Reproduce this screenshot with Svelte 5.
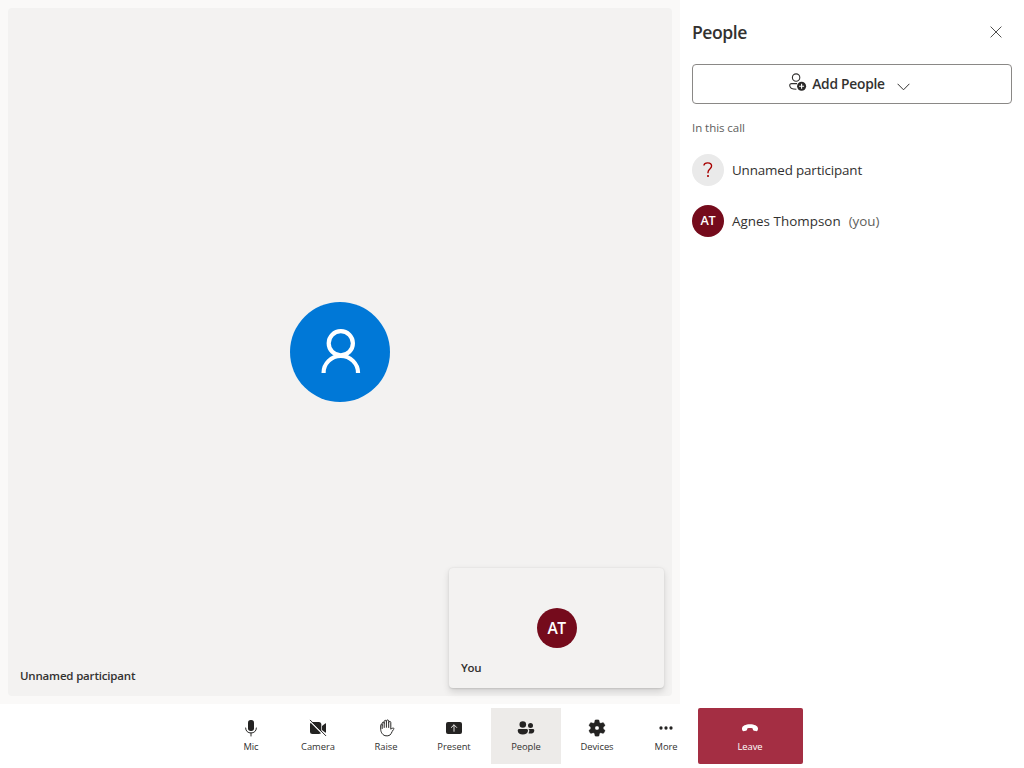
<script>
  const controls = [
    { id: 'mic', label: 'Mic', width: 60 },
    { id: 'camera', label: 'Camera', width: 74 },
    { id: 'raise', label: 'Raise', width: 62 },
    { id: 'present', label: 'Present', width: 74 },
    { id: 'people', label: 'People', width: 70, active: true },
    { id: 'devices', label: 'Devices', width: 73 },
    { id: 'more', label: 'More', width: 64 },
    { id: 'leave', label: 'Leave', width: 105 }
  ];
</script>

<div class="app">
  <div class="main">
    <section class="stage">
      <div class="tile">
        <div class="persona">
          <svg width="100" height="100" viewBox="0 0 100 100" fill="none" stroke="#fff" stroke-width="4.2">
            <circle cx="50.8" cy="41.2" r="12.1" />
            <path d="M33.6 71V70.6C33.6 61.6 41.3 53.9 50.8 53.9S68 61.600 68 70.600V71" />
          </svg>
        </div>
        <span class="name">Unnamed participant</span>
        <div class="self">
          <div class="avatar large">AT</div>
          <span class="you">You</span>
        </div>
      </div>
    </section>

    <aside class="pane">
      <header>
        <h2>People</h2>
        <button class="close" aria-label="Close">
          <svg width="12" height="12" viewBox="0 0 12 12" fill="none" stroke="#3b3a39" stroke-width=".9"><path d="M.6.6l10.8 10.8M11.4.6L.6 11.4" /></svg>
        </button>
      </header>
      <button class="add">
        <svg class="addicon" width="18" height="18" viewBox="0 0 18 18">
          <g fill="none" stroke="#323130" stroke-width="1.1">
            <circle cx="7.1" cy="4.6" r="3.7" />
            <path d="M8.1 10.6H2.5C1.4 10.6.7 11.3.7 12.2c0 2.6 2.7 4.1 6.7 4.1" />
          </g>
          <circle cx="12.6" cy="13.2" r="4.5" fill="#292827" />
          <path d="M12.6 10.7v5M10.1 13.2h5" stroke="#fff" stroke-width="1.1" />
        </svg>
        <span class="addlabel">Add People</span>
        <svg class="chev" width="13" height="8" viewBox="0 0 13 8" fill="none" stroke="#323130" stroke-width="1"><path d="M.6.8l5.9 6 5.9-6" /></svg>
      </button>
      <p class="heading">In this call</p>
      <ul>
        <li>
          <div class="avatar unknown">
            <svg width="10" height="16" viewBox="0 0 10 16" fill="none" stroke="#a80000" stroke-width="1.35"><path d="M.9 3.5C1.1 1.8 2.700.9 4.700.9c2.300 0 3.900 1.200 3.900 3.200C8.600 6.900 5 7 5 10.200V11.200" /><path d="M5 13v1.900" stroke-width="1.6" /></svg>
          </div>
          <span class="person">Unnamed participant</span>
        </li>
        <li>
          <div class="avatar">AT</div>
          <span class="person agnes">Agnes Thompson</span>
          <span class="tag">(you)</span>
        </li>
      </ul>
    </aside>
  </div>

  <footer>
    {#each controls as c}
      <button class="control {c.id}" class:active={c.active} style="width: {c.width}px">
        <svg width="20" height="20" viewBox="0 0 20 20" fill="#242322">
          {#if c.id === 'mic'}
            <rect x="7" y="2" width="6" height="11" rx="2.700" />
            <path d="M4.600 10c0 3.100 2.400 5 5.400 5s5.400-1.900 5.400-5M10 15v3" fill="none" stroke="#292827" stroke-width="1" stroke-linecap="round" />
          {:else if c.id === 'camera'}
            <rect x="2" y="4" width="11.300" height="12" rx="2.500" />
            <path d="M14 8l3.200-2.500c.4-.3.8-.1.800.4v8.200c0 .5-.4.700-.8.400L14 12z" />
            <path d="M1.600 2.900L17 18.300" stroke="#fff" stroke-width="1.300" />
            <path d="M2.300 2.200L17.800 17.700" stroke="#292827" stroke-width="1" stroke-linecap="round" />
          {:else if c.id === 'raise'}
            <path d="M5.900 10.200V5c0-1.600 2-1.600 2 0V3.300c0-1.700 2.200-1.700 2.200 0V2.900c0-1.700 2.300-1.700 2.300 0v1.300c0-1.500 2.100-1.500 2.100 0v6.700c1.100-1.200 2.700-1.300 3.200-.7.3.4-.2.800-.8 1.400-1.500 1.500-2 5.900-5.300 5.900H9.700c-2.800 0-5.300-3.200-5.300-6.600V7c0-1.500 1.500-1.500 1.500 0M7.900 5v4.200M10.100 3.300V9M12.400 4.200v5" transform="translate(.3 .3)" fill="none" stroke="#292827" stroke-width="1" stroke-linecap="round" stroke-linejoin="round" />
          {:else if c.id === 'present'}
            <rect x="2" y="4" width="16" height="12" rx="2" />
            <path d="M10 13.300V7M7.300 9.500L10 6.800l2.700 2.700" fill="none" stroke="#e4e2e0" stroke-width="1" stroke-linecap="round" stroke-linejoin="round" />
          {:else if c.id === 'people'}
            <circle cx="6.800" cy="6.500" r="3.300" />
            <circle cx="14.500" cy="7.500" r="2.500" />
            <path d="M3.200 11h7.300c.9 0 1.500.7 1.500 1.500 0 2.500-2.200 4-5.200 4s-5.100-1.500-5.100-4c0-.8.700-1.500 1.500-1.500zM12.300 11h4.500c.9 0 1.500.6 1.500 1.400 0 2.200-1.800 3.200-4 3.200-.7 0-1.300-.1-1.900-.3.600-.8.900-1.800.900-2.800 0-.6-.4-1.200-1-1.500z" />
          {:else if c.id === 'devices'}
            <path fill-rule="evenodd" d="M7.500 4.500L8 2Q10 1.500 12 2L12.500 4.500L13.700 5.200L16.200 4.400Q17.600 5.900 18.100 7.600L16.300 9.200V10.800L18.100 12.400Q17.600 14.100 16.200 15.600L13.700 14.800L12.500 15.500L12 18Q10 18.500 8 18L7.500 15.500L6.300 14.800L3.800 15.600Q2.400 14.100 1.900 12.400L3.700 10.800V9.200L1.900 7.600Q2.400 5.900 3.800 4.400L6.300 5.200ZM10 7.900a2.100 2.100 0 100 4.200a2.100 2.100 0 000-4.200z" stroke="#292827" stroke-width=".3" stroke-linejoin="round" />
          {:else if c.id === 'more'}
            <circle cx="5" cy="10" r="1.650" /><circle cx="10" cy="10" r="1.650" /><circle cx="15" cy="10" r="1.650" />
          {:else}
            <path fill="#fff" d="M2 10.300C2.300 7.900 5.700 6.300 10 6.300s7.700 1.600 8 4c.1 1-.2 2.200-.9 2.700-.5.300-1.100.1-2.900-.3-1-.2-1.200-.6-1.300-1.300l-.2-1c-1.700-.5-3.700-.5-5.400 0l-.2 1c-.1.700-.3 1.100-1.300 1.300-1.800.4-2.400.6-2.900.3-.7-.5-1-1.700-.9-2.700z" />
          {/if}
        </svg>
        <span>{c.label}</span>
      </button>
    {/each}
  </footer>
</div>

<style>
  :global(body) { margin: 0; background: #fff; }
  .app {
    width: 1024px;
    height: 768px;
    display: flex;
    flex-direction: column;
    font-family: "Open Sans", "Noto Sans", sans-serif;
    color: #323130;
    overflow: hidden;
  }
  button { font: inherit; color: inherit; border: 0; background: none; padding: 0; margin: 0; box-sizing: border-box; }
  svg { display: block; flex: none; }
  .main { display: flex; height: 704px; }
  .stage { width: 680px; box-sizing: border-box; padding: 8px; background: #faf9f8; }
  .tile {
    position: relative;
    height: 100%;
    display: flex;
    align-items: center;
    justify-content: center;
    background: #f3f2f1;
    border-radius: 4px;
  }
  .persona { width: 100px; height: 100px; border-radius: 50%; background: #0078d7; }
  .name {
    position: absolute;
    left: 12px;
    bottom: 12px;
    font-size: 11.500px;
    line-height: 16px;
    font-weight: 600;
    letter-spacing: -.18px;
  }
  .self {
    position: absolute;
    right: 8px;
    bottom: 8px;
    width: 215px;
    height: 120px;
    display: flex;
    align-items: center;
    justify-content: center;
    background: #f3f2f1;
    border-radius: 4px;
    box-shadow: 0 3.200px 7.200px rgba(0, 0, 0, .13), 0 .6px 1.800px rgba(0, 0, 0, .11);
  }
  .you { position: absolute; left: 12px; bottom: 12px; font-size: 11.500px; line-height: 16px; font-weight: 600; letter-spacing: -.3px; }
  .avatar {
    width: 32px;
    height: 32px;
    flex: none;
    display: flex;
    align-items: center;
    justify-content: center;
    border-radius: 50%;
    background: #750b1c;
    color: #fff;
    font-size: 12.600px;
    font-weight: 600;
    letter-spacing: -.3px;
  }
  .avatar.large { width: 40px; height: 40px; font-size: 15.600px; line-height: 20px; padding-bottom: 1px; box-sizing: border-box; letter-spacing: -.5px; }
  .avatar.unknown { background: #eaeaea; }
  .pane { flex: 1; padding: 0 12px; background: #fff; }
  header { display: flex; align-items: center; justify-content: space-between; height: 64px; }
  h2 { margin: 0 0 1px; font-size: 17.600px; line-height: 24px; font-weight: 600; letter-spacing: -.45px; }
  .close { width: 32px; height: 32px; display: flex; align-items: center; justify-content: center; }
  .add {
    width: 320px;
    height: 40px;
    display: flex;
    align-items: center;
    justify-content: center;
    padding-right: 5px;
    border: 1px solid #8a8886;
    border-radius: 4px;
    font-size: 13.800px;
    font-weight: 600;
    letter-spacing: -.25px;
  }
  .addlabel { margin-bottom: 2px; }
  .addicon { margin: -4px 5px 0 0; }
  .chev { margin: 5px 0 0 12px; }
  .heading { margin: 16px 0 0; font-size: 11.500px; line-height: 16px; color: #605e5c; letter-spacing: -.05px; }
  ul { list-style: none; margin: 8px 0 0; padding: 0; }
  li { display: flex; align-items: center; height: 51px; }
  .person { margin-left: 8px; font-size: 13.400px; letter-spacing: -.15px; }
  .agnes { letter-spacing: .03px; }
  .tag { margin-left: 8px; font-size: 13.400px; color: #605e5c; }
  footer { height: 64px; display: flex; align-items: center; justify-content: center; background: #fff; }
  .control {
    height: 56px;
    display: flex;
    flex-direction: column;
    align-items: center;
    padding-top: 10px;
    font-size: 9.400px;
    line-height: 17px;
    letter-spacing: -.04px;
  }
  .active { background: #edebe9; }
  .devices, .leave { padding-right: 1px; }
  .leave { background: #a42e43; color: #fff; border-radius: 2px; }
</style>
